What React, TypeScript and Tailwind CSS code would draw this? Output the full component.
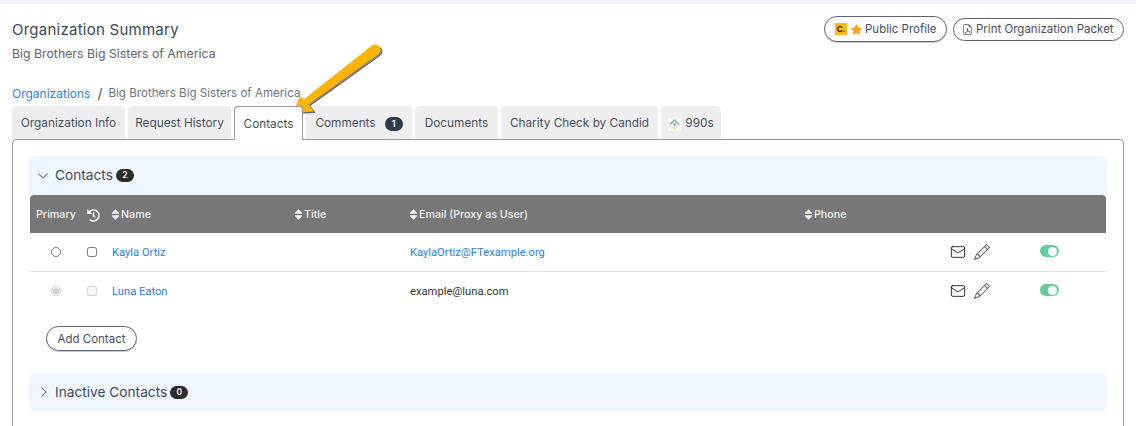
import { Mail } from "lucide-react";
import { BsChevronDown, BsChevronRight, BsFileEarmarkPdf, BsPencil, BsStarFill } from "react-icons/bs";
import { FaHistory, FaSort } from "react-icons/fa";

const tabs = [
  { label: "Organization Info", width: "w-[113px]" },
  { label: "Request History", width: "w-[103px]" },
  { label: "Contacts", width: "w-[69px]", active: true },
  { label: "Comments", width: "w-[106px]", badge: "1" },
  { label: "Documents", width: "w-[83px]" },
  { label: "Charity Check by Candid", width: "w-[157px]" },
  { label: "990s", width: "w-[60px]", logo: true },
];

const contacts = [
  { name: "Kayla Ortiz", email: "KaylaOrtiz@FTexample.org", emailLink: true, primary: false },
  { name: "Luna Eaton", email: "example@luna.com", emailLink: false, primary: true },
];

const gridCols = "grid grid-cols-[52px_29px_183px_115px_395px_145px_91px_66px] items-center";

function CountBadge({ count }: { count: number }) {
  return (
    <span className="flex h-[13px] w-[18px] items-center justify-center rounded-full bg-[#2b2b2b] text-[8.5px] font-semibold text-white">
      {count}
    </span>
  );
}

function SortHead({ label }: { label: string }) {
  return (
    <div className="flex items-center gap-[1px] font-medium">
      <FaSort className="h-[13px] w-[9px]" />
      <span>{label}</span>
    </div>
  );
}

function NinetyLogo() {
  return (
    <svg width="13" height="13" viewBox="0 0 13 13" className="shrink-0">
      <rect width="13" height="13" fill="#f9faf4" />
      <path d="M6.5 1 12 6.5H10.2L6.5 2.8 2.8 6.5H1Z" fill="#6fa8a0" />
      <path d="M6.5 4.6 8.4 6.5 6.5 8.4 4.6 6.5Z" fill="#8fb7c9" />
      <path d="M3.2 7.6 6.5 10.9 9.8 7.6H11L6.5 12.1 2 7.6Z" fill="#ead67a" />
    </svg>
  );
}

const arrowShape = "M14.2 59.6 82 6A5 5 0 0 1 88 14L17.8 64.4 23 71 4 72 10 57Z";

function Arrow() {
  return (
    <svg width="100" height="80" viewBox="0 0 100 80" className="pointer-events-none absolute left-[290px] top-[40px]">
      <path d={arrowShape} fill="#333333" fillOpacity="0.6" stroke="#333333" strokeOpacity="0.6" strokeWidth="1" strokeLinejoin="round" transform="translate(2 1.5)" />
      <path d={arrowShape} fill="#fdb404" stroke="#fdb404" strokeWidth="1" strokeLinejoin="round" />
    </svg>
  );
}

export default function App() {
  return (
    <div className="relative h-[426px] w-[1136px] overflow-hidden bg-white font-['Inter',sans-serif] text-[#46505f]">
      <div className="h-1 bg-[#eef0f8]" />

      <div className="px-3">
        <div className="flex items-start justify-between">
          <div className="pt-[15px]">
            <h1 className="text-[15px] leading-[22px] tracking-[0.25px] text-[#3d4857]">Organization Summary</h1>
            <p className="mt-[3px] text-[12.3px] leading-[20px] text-[#5c6470]">Big Brothers Big Sisters of America</p>
          </div>
          <div className="flex items-center gap-[6px] pt-[12px]">
            <button type="button" className="flex h-[26px] w-[123px] items-center rounded-full border border-[#5b6675] pl-[10px] text-[11.5px] shadow-[0_1px_0_#c5cad1]">
              <span className="flex h-[12px] w-[12px] items-center justify-center bg-[#fdb813] text-[8px] font-bold text-[#222]">C.</span>
              <BsStarFill className="ml-[4px] text-[11px] text-[#f6a31c]" />
              <span className="ml-[3px] pt-px">Public Profile</span>
            </button>
            <button type="button" className="flex h-[23px] w-[171px] items-center rounded-full border border-[#5b6675] pl-[8px] text-[11.5px]">
              <BsFileEarmarkPdf className="text-[11px]" />
              <span className="ml-[3px] pt-px">Print Organization Packet</span>
            </button>
          </div>
        </div>

        <div className="mt-[19px] flex h-[20px] items-center pt-px text-[11.6px]">
          <a href="#" className="text-[12px] text-[#2f80d9]">Organizations</a>
          <span className="ml-[7px] text-[14px] text-[#46505f]">/</span>
          <span className="ml-[6px] text-[#6d7480]">Big Brothers Big Sisters of America</span>
        </div>

        <div className="mt-[3px] flex gap-[3px] text-[11.8px]">
          {tabs.map((tab) => (
            <div
              key={tab.label}
              className={
                tab.active
                  ? `relative z-10 -mb-px flex h-[34px] ${tab.width} items-center justify-center rounded-t border border-b-0 border-[#999] bg-white pt-[3px] text-[#46505f]`
                  : `flex h-[33px] ${tab.width} items-center justify-center gap-[4px] rounded-t bg-[#eeeeee] pt-[3px] text-[#46505f]`
              }
            >
              {tab.logo ? <NinetyLogo /> : null}
              <span>{tab.label}</span>
              {tab.badge ? (
                <span className="ml-[5px] flex h-[14px] w-[18px] items-center justify-center rounded-full bg-[#2c3a4f] text-[9px] font-semibold text-white">
                  {tab.badge}
                </span>
              ) : null}
            </div>
          ))}
        </div>

        <div className="h-[320px] rounded-t border border-[#999] px-4 pt-4">
          <div className="flex h-[39px] items-center rounded-t-md bg-[#eff6ff] pl-[8px] text-[13.7px] text-[#3f4a59]">
            <BsChevronDown className="text-[12px]" />
            <span className="ml-[6px]">Contacts</span>
            <span className="ml-[3px]"><CountBadge count={2} /></span>
          </div>

          <div className="mx-px">
            <div className={`${gridCols} h-[38px] rounded-t-sm bg-[#777777] pt-[2px] text-[10.7px] text-[#f2f2f2]`}>
              <div className="pl-[6px] font-medium">Primary</div>
              <div className="pl-[5px]"><FaHistory className="text-[13px]" /></div>
              <SortHead label="Name" />
              <SortHead label="Title" />
              <SortHead label="Email (Proxy as User)" />
              <SortHead label="Phone" />
              <div />
              <div />
            </div>

            {contacts.map((contact, i) => (
              <div
                key={contact.name}
                className={`${gridCols} font-['Roboto',sans-serif] text-[11.2px] ${i === 0 ? "h-[39px] border-b border-[#e3e3e3]" : "h-[38px]"}`}
              >
                <div className="flex justify-center">
                  <input type="radio" readOnly checked={contact.primary} disabled={contact.primary} className="m-0 h-[10px] w-[10px] accent-[#9b9b9b]" />
                </div>
                <div className="pl-[5px]">
                  <input type="checkbox" readOnly disabled={contact.primary} className="m-0 block h-[10px] w-[10px]" />
                </div>
                <a href="#" className="pl-px pt-[2px] text-[#2f80d9]">{contact.name}</a>
                <div />
                {contact.emailLink ? (
                  <a href="#" className="pl-px pt-[2px] text-[#2f80d9]">{contact.email}</a>
                ) : (
                  <div className="pl-px pt-[2px] text-[#333]">{contact.email}</div>
                )}
                <div />
                <div className="flex items-center gap-[8px] pl-px">
                  <Mail size={16} strokeWidth={1.4} className="text-[#222]" />
                  <BsPencil className="text-[16px] text-[#5a6472]" />
                </div>
                <div>
                  <div className="mb-[2px] flex h-[12px] w-[19px] items-center justify-end rounded-full bg-[#62cf9a] pr-[2px]">
                    <span className="h-[9px] w-[9px] rounded-full bg-white" />
                  </div>
                </div>
              </div>
            ))}
          </div>

          <div className="flex pl-[17px] pt-[16px]">
            <button type="button" className="flex h-[25px] w-[91px] items-center justify-center rounded-full border border-[#5b6675] pt-[2px] text-[11.5px] shadow-[0_1px_0_#c5cad1]">
              Add Contact
            </button>
          </div>

          <div className="mt-[22px] flex h-[38px] items-center rounded-md bg-[#eff6ff] pl-[9px] text-[13.7px] text-[#3f4a59]">
            <BsChevronRight className="text-[12px]" />
            <span className="ml-[5px]">Inactive Contacts</span>
            <span className="ml-[3px]"><CountBadge count={0} /></span>
          </div>
        </div>
      </div>

      <Arrow />
    </div>
  );
}
